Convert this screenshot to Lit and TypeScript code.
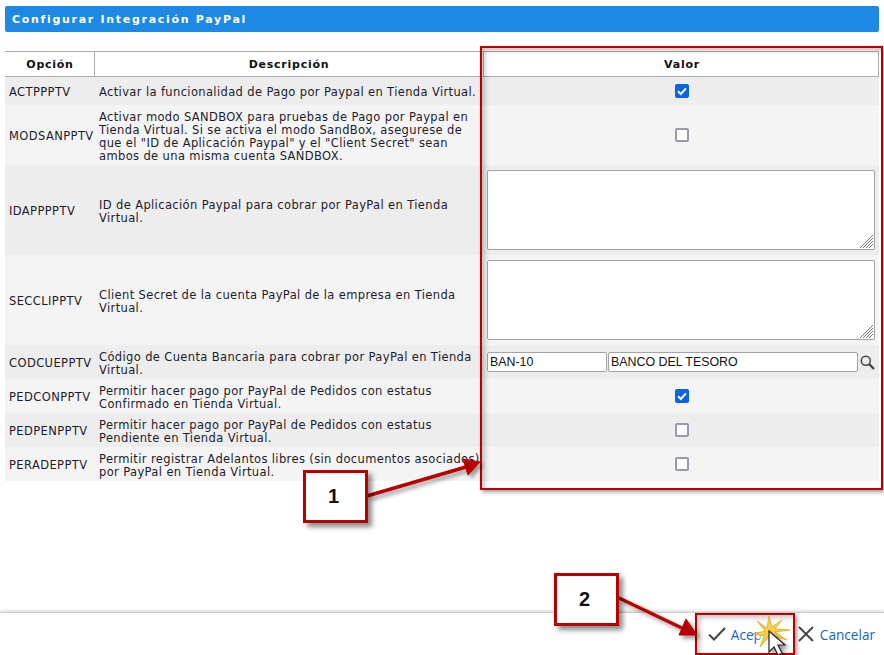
import { LitElement, html, css, svg } from "lit";
import { customElement } from "lit/decorators.js";

type Row = { code: string; desc: string[]; kind: "on" | "off" | "area" | "bank" };
const rows: Row[] = [
  { code: "ACTPPPTV", desc: ["Activar la funcionalidad de Pago por Paypal en Tienda Virtual."], kind: "on" },
  { code: "MODSANPPTV", desc: ["Activar modo SANDBOX para pruebas de Pago por Paypal en", "Tienda Virtual. Si se activa el modo SandBox, asegurese de", 'que el "ID de Aplicación Paypal" y el "Client Secret" sean', "ambos de una misma cuenta SANDBOX."], kind: "off" },
  { code: "IDAPPPPTV", desc: ["ID de Aplicación Paypal para cobrar por PayPal en Tienda", "Virtual."], kind: "area" },
  { code: "SECCLIPPTV", desc: ["Client Secret de la cuenta PayPal de la empresa en Tienda", "Virtual."], kind: "area" },
  { code: "CODCUEPPTV", desc: ["Código de Cuenta Bancaria para cobrar por PayPal en Tienda", "Virtual."], kind: "bank" },
  { code: "PEDCONPPTV", desc: ["Permitir hacer pago por PayPal de Pedidos con estatus", "Confirmado en Tienda Virtual."], kind: "on" },
  { code: "PEDPENPPTV", desc: ["Permitir hacer pago por PayPal de Pedidos con estatus", "Pendiente en Tienda Virtual."], kind: "off" },
  { code: "PERADEPPTV", desc: ["Permitir registrar Adelantos libres (sin documentos asociados)", "por PayPal en Tienda Virtual."], kind: "off" },
];

@customElement("app-root")
export class AppRoot extends LitElement {
  static styles = css`
    :host { display: block; width: 884px; height: 655px; position: relative; overflow: hidden; background: #fff; font-family: "DejaVu Sans", Verdana, sans-serif; font-size: 11.5px; color: #1c1c2c; }
    .page { height: 655px; display: flex; flex-direction: column; padding-top: 6px; box-sizing: border-box; }
    .title { margin: 0 5px; height: 26px; background: #1e88e5; border-radius: 2px; color: #fff; font-weight: bold; font-size: 11px; letter-spacing: 1.7px; display: flex; align-items: center; padding-left: 7px; }
    .table { margin: 0 5px; display: grid; grid-template-columns: 90px 388px 396px; }
    .head { margin-top: 19px; }
    .th { height: 24px; border-top: 1px solid #aaa; border-bottom: 1px solid #aaa; display: flex; align-items: center; justify-content: center; font-weight: bold; font-size: 11px; letter-spacing: 0.75px; color: #111; }
    .th.op { border-right: 1px solid #aaa; padding-left: 1px; }
    .th.val { border-left: 1px solid #aaa; border-right: 1px solid #aaa; }
    .row { display: contents; }
    .cell { display: flex; align-items: center; padding: 4px 0; background: #f4f4f4; line-height: 13px; min-height: 20px; }
    .row:nth-child(odd) .cell { background: #ededed; }
    .code { padding: 5.5px 0 2.5px 4px; letter-spacing: 0.4px; }
    .descwrap { padding: 5.5px 0 2.5px 4px; white-space: nowrap; letter-spacing: 0.37px; }
    .val { justify-content: center; padding-left: 2px; }
    .val.box { padding: 5px 4px; }
    .cb { width: 14px; height: 14px; box-sizing: border-box; border-radius: 2px; border: 2px solid #9a99a9; background: #fff; display: block; }
    .cb.on { background: #0b63e5; border: none; }
    .cb svg { display: block; }
    .areawrap { position: relative; width: 388px; height: 80px; flex: none; }
    textarea { display: block; width: 100%; height: 100%; margin: 0; padding: 2px; box-sizing: border-box; border: 1px solid #a3a3a3; border-radius: 2px; background: #fff; resize: none; outline: none; }
    .grip { position: absolute; right: 1px; bottom: 1px; }
    .bank { display: flex; align-items: center; gap: 1px; width: 388px; }
    .inp { height: 20px; box-sizing: border-box; border: 1px solid #a3a3a3; border-radius: 2px; background: #fff; font: 12.4px "Liberation Sans", Arial, sans-serif; padding: 0 2px; color: #111; outline: none; margin: 0; }
    .inp.a { width: 120px; }
    .inp.b { width: 250px; }
    .search { margin-left: 1px; flex: none; }
    .footer { margin-top: auto; height: 42px; border-top: 1px solid #cfcfcf; box-shadow: 0 -1px 3px rgba(0,0,0,.18); display: flex; justify-content: flex-end; align-items: center; padding-right: 9px; font-family: "Open Sans", sans-serif; font-size: 13.6px; color: #1565c0; }
    .btn { display: flex; align-items: center; gap: 6px; }
    .btn.ok { margin-right: 18px; gap: 5px; }
    .btn svg { display: block; }
    .overlay { position: absolute; left: 0; top: 0; width: 884px; height: 655px; pointer-events: none; }
    .overlay svg { position: absolute; left: 0; top: 0; }
    .callout { position: absolute; box-sizing: border-box; width: 65px; height: 53px; padding-right: 4px; background: #fff; border: 3px solid #b80000; box-shadow: 4px 4px 5px rgba(0,0,0,.45); display: flex; align-items: center; justify-content: center; font: bold 20px "Liberation Sans", Arial, sans-serif; color: #111; }
    .c1 { left: 303px; top: 470px; }
    .c2 { left: 554px; top: 573px; }
    .frame { position: absolute; box-sizing: border-box; border: 2px solid #b80000; box-shadow: 2px 2px 4px rgba(0,0,0,.4), inset 3px 3px 5px rgba(0,0,0,.22); }
    .f1 { left: 480px; top: 46px; width: 403px; height: 444px; }
    .f2 { left: 695px; top: 613px; width: 100px; height: 42px; }
  `;

  private value(r: Row) {
    if (r.kind === "on") return html`<span class="cb on"><svg width="14" height="14" viewBox="0 0 14 14"><path d="M3 7.3 5.8 10 11 4.3" fill="none" stroke="#fff" stroke-width="2"/></svg></span>`;
    if (r.kind === "off") return html`<span class="cb"></span>`;
    if (r.kind === "area")
      return html`<div class="areawrap"><textarea></textarea>
        <svg class="grip" width="15" height="15" viewBox="0 0 15 15" stroke="#777" stroke-width="1"><path d="M1 14 14 1M4 14 14 4M7 14 14 7M10 14 14 10"/></svg></div>`;
    return html`<div class="bank"><input class="inp a" .value=${"BAN-10"} /><input class="inp b" .value=${"BANCO DEL TESORO"} />
      <svg class="search" width="15" height="15" viewBox="0 0 15 15" fill="none" stroke="#444"><circle cx="5.8" cy="5.8" r="4.5" stroke-width="1.5"/><path d="M9.2 9.2 14 14" stroke-width="2.4"/></svg></div>`;
  }

  private arrows() {
    return svg`
      <defs><filter id="sh" x="-20%" y="-20%" width="150%" height="170%"><feDropShadow dx="3" dy="3" stdDeviation="2" flood-color="#000" flood-opacity=".4"/></filter>
      <filter id="bl"><feGaussianBlur stdDeviation="2"/></filter></defs>
      <g fill="#b80000" stroke="#b80000" filter="url(#sh)">
        <path d="M367 496 466 467" stroke-width="3.5"/><path d="M480 462 463 459 468 475Z"/>
        <path d="M619 598 684 629" stroke-width="3.5"/><path d="M697 635 679 635 686 619Z"/>
      </g>
      <ellipse cx="771" cy="633" rx="14" ry="10" fill="#fff" opacity=".9" filter="url(#bl)"/>
      <path d="M790 630 775 632 787 640 773 636 776 648 769 637 760 647 764 636 753 634 765 631 757 621 767 628 769 616 772 627 782 620 775 629Z" fill="#f5cf4a" stroke="#e0a818" stroke-width=".8"/>
      <path d="M769 631V652L774 647 778 655 782 653 778 645 785 645Z" fill="#fff" stroke="#222" stroke-width="1.2" filter="url(#sh)"/>`;
  }

  render() {
    return html`
      <div class="page">
        <div class="title">Configurar Integración PayPal</div>
        <div class="table head">
          <div class="th op">Opción</div><div class="th">Descripción</div><div class="th val">Valor</div>
        </div>
        <div class="table">
          ${rows.map(
            (r) => html`<div class="row">
              <div class="cell code">${r.code}</div>
              <div class="cell descwrap"><div>${r.desc.map((d) => html`<div>${d}</div>`)}</div></div>
              <div class="cell val ${r.kind === "area" || r.kind === "bank" ? "box" : ""}">${this.value(r)}</div>
            </div>`
          )}
        </div>
        <div class="footer">
          <div class="btn ok"><svg width="18" height="14" viewBox="0 0 18 14" fill="none" stroke="#444" stroke-width="2"><path d="M1 7.5 6 12.5 17 1"/></svg><span>Aceptar</span></div>
          <div class="btn"><svg width="16" height="16" viewBox="0 0 16 16" fill="none" stroke="#444" stroke-width="1.8"><path d="M1 1 15 15M15 1 1 15"/></svg><span>Cancelar</span></div>
        </div>
      </div>
      <div class="overlay">
        <div class="frame f1"></div><div class="frame f2"></div>
        <svg width="884" height="655">${this.arrows()}</svg>
        <div class="callout c1">1</div><div class="callout c2">2</div>
      </div>`;
  }
}
